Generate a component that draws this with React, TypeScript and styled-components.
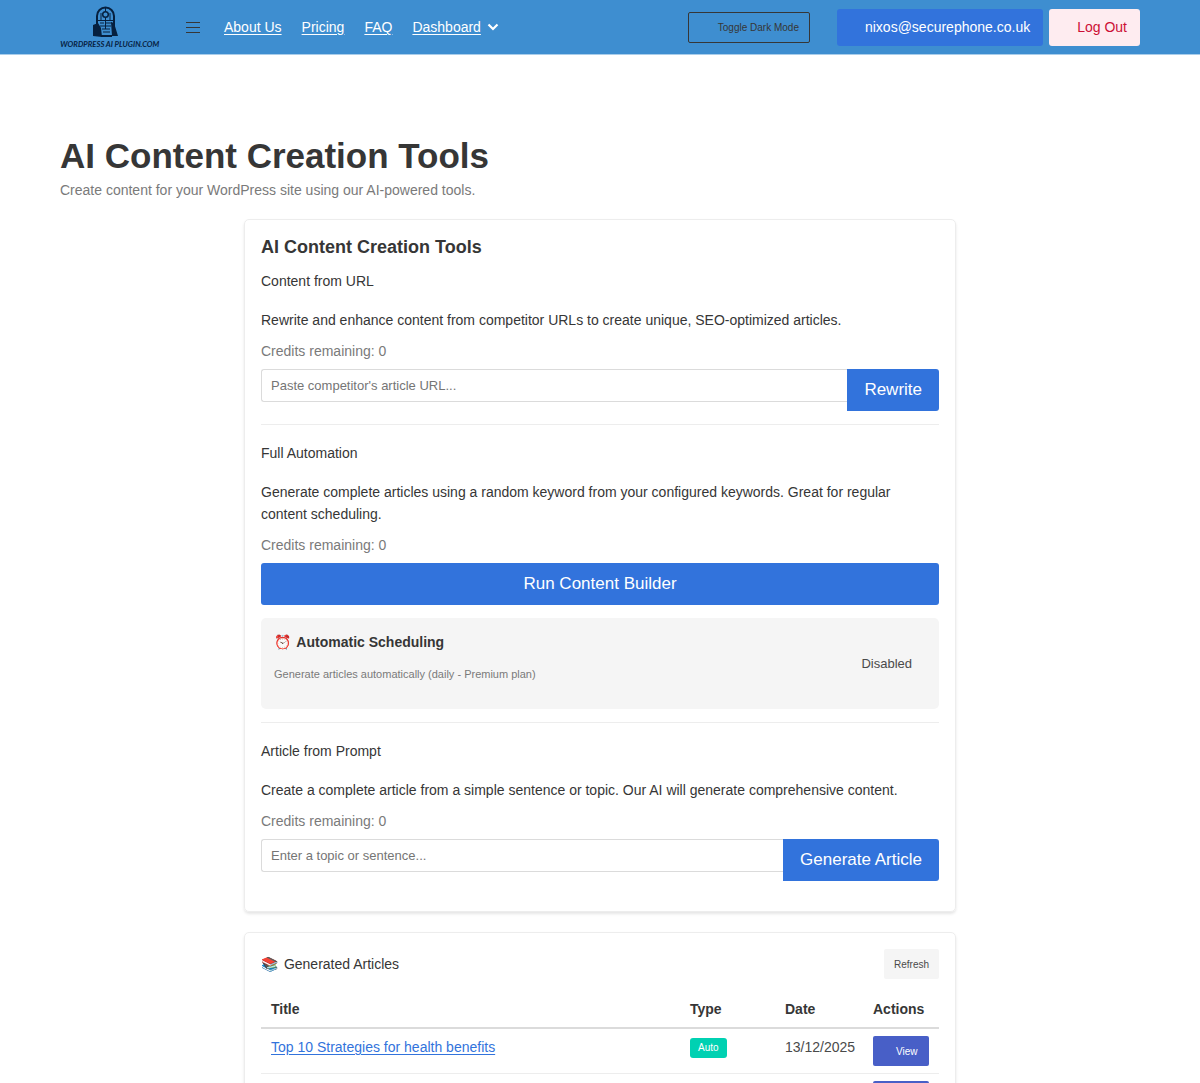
import React from "react";
import styled, { createGlobalStyle } from "styled-components";

const Global = createGlobalStyle`
  * { box-sizing: border-box; }
  body { margin: 0; background: #fff; color: #363636; font: 14px/22px "Liberation Sans", Arial, sans-serif; }
  h1, h2, h3, h4, p { margin: 0; }
  button, input { font-family: inherit; }
`;

const Page = styled.div`
  height: 100vh;
  overflow: hidden;
`;
const Nav = styled.nav`
  display: flex;
  align-items: center;
  height: 55px;
  padding: 0 60px;
  background: #3e8ed0;
  border-bottom: 1px solid #a9cdea;
`;
const Logo = styled.a`
  display: block;
  height: 44px;
  margin-right: 26px;
`;
const MenuButton = styled.button`
  display: grid;
  gap: 4px;
  width: 14px;
  margin-right: 24px;
  padding: 0;
  border: 0;
  background: none;
`;
const Bar = styled.span`
  height: 1px;
  background: #363636;
`;
const NavLinks = styled.div`
  display: flex;
  flex: 1;
  gap: 20px;
`;
const NavLink = styled.a`
  color: #fff;
  text-underline-offset: 2px;
`;
const Dropdown = styled.span`
  display: flex;
  align-items: center;
  gap: 6px;
`;
const NavActions = styled.div`
  display: flex;
  align-items: center;
  gap: 6px;
`;
const ToggleButton = styled.button`
  height: 31px;
  margin-right: 21px;
  padding: 0 10px 0 29px;
  border: 1px solid #363636;
  border-radius: 2px;
  background: none;
  color: #363636;
  font-size: 10px;
`;
const NavButton = styled.button<{ $danger?: boolean }>`
  height: 37px;
  padding: 0 13px 0 28px;
  border: 0;
  border-radius: 3px;
  background: ${(p) => (p.$danger ? "#feecf0" : "#3273dc")};
  color: ${(p) => (p.$danger ? "#cc0f35" : "#fff")};
  font-size: 14px;
`;
const Main = styled.main`
  padding: 80px 60px 0;
`;
const PageTitle = styled.h1`
  font-size: 35px;
  line-height: 42px;
`;
const PageSubtitle = styled.p`
  margin-top: 2px;
  color: #7a7a7a;
`;
const Card = styled.section`
  max-width: 712px;
  margin: 18px auto 20px;
  padding: 16px 16px 30px;
  border: 1px solid #ededed;
  border-radius: 5px;
  box-shadow: 0 2px 3px rgba(10, 10, 10, 0.1);
`;
const CardTitle = styled.h2`
  font-size: 18px;
  line-height: 22px;
`;
const Tool = styled.section<{ $first?: boolean }>`
  margin-top: ${(p) => (p.$first ? "12px" : "13px")};
  padding-top: ${(p) => (p.$first ? "0" : "17px")};
  border-top: ${(p) => (p.$first ? "0" : "1px solid #ededed")};
`;
const ToolTitle = styled.h3`
  font-size: 14px;
  font-weight: 400;
`;
const Emoji = styled.span`
  margin-right: 2px;
`;
const Description = styled.p`
  margin-top: 17px;
  padding-right: 32px;
`;
const Credits = styled.p`
  margin: 9px 0 7px;
  color: #7a7a7a;
`;
const InputRow = styled.form`
  display: flex;
  align-items: flex-start;
`;
const TextInput = styled.input`
  flex: 1;
  min-width: 0;
  height: 33px;
  padding: 0 9px;
  border: 1px solid #dbdbdb;
  border-right: 0;
  border-radius: 3px 0 0 3px;
  background: #fff;
  font-size: 13px;
  &::placeholder { color: #757575; }
`;
const PrimaryButton = styled.button<{ $wide?: boolean }>`
  width: ${(p) => (p.$wide ? "100%" : "auto")};
  height: 42px;
  padding: 0 17px;
  border: 0;
  border-radius: ${(p) => (p.$wide ? "3px" : "0 3px 3px 0")};
  background: #3273dc;
  color: #fff;
  font-size: 17px;
`;
const Schedule = styled.div`
  display: flex;
  align-items: center;
  justify-content: space-between;
  margin-top: 13px;
  padding: 13px 27px 13px 13px;
  border-radius: 5px;
  background: #f5f5f5;
`;
const ScheduleTitle = styled.h4`
  font-size: 14px;
`;
const ScheduleNote = styled.p`
  margin: 13px 0 14px;
  color: #7a7a7a;
  font-size: 11px;
  line-height: 16px;
`;
const Status = styled.span`
  color: #4a4a4a;
  font-size: 13px;
`;
const ListHeader = styled.header`
  display: flex;
  align-items: center;
  justify-content: space-between;
`;
const SmallButton = styled.button<{ $view?: boolean }>`
  display: block;
  height: 30px;
  padding: ${(p) => (p.$view ? "0 11px 0 23px" : "0 10px")};
  border: 0;
  border-radius: 2px;
  background: ${(p) => (p.$view ? "#485fc7" : "#f5f5f5")};
  color: ${(p) => (p.$view ? "#fff" : "#4a4a4a")};
  font-size: 10px;
`;
const Table = styled.table`
  width: 100%;
  margin-top: 13px;
  border-collapse: separate;
  border-spacing: 0;
  table-layout: fixed;
`;
const HeadCell = styled.th<{ $width?: string }>`
  width: ${(p) => p.$width ?? "auto"};
  padding: 7px 10px;
  border-bottom: 2px solid #dbdbdb;
  line-height: 21px;
  text-align: left;
`;
const Cell = styled.td`
  padding: 7px 0 7px 10px;
  border-bottom: 1px solid #ededed;
  color: #4a4a4a;
  vertical-align: top;
`;
const ArticleLink = styled.a`
  color: #3273dc;
  text-underline-offset: 2px;
`;
const Tag = styled.span<{ $color: string }>`
  display: block;
  width: fit-content;
  margin-top: 2px;
  padding: 0 8px;
  border-radius: 3px;
  background: ${(p) => p.$color};
  color: #fff;
  font-size: 10px;
  line-height: 20px;
`;

const articles = [
  { title: "Top 10 Strategies for health benefits", type: "Auto", color: "#00d1b2", date: "13/12/2025" },
  { title: "", type: "Prompt", color: "#48c78e", date: "" },
];

function LogoMark() {
  return (
    <svg width="100" height="44" viewBox="0 0 100 44" role="img" aria-label="WordPress AI Plugin.com">
      <g fill="none" stroke="#06203f">
        <path d="M37 21V11a8.500 8.500 0 0 1 17 0v12" strokeWidth="2" />
        <circle cx="45.500" cy="9.500" r="2.800" strokeWidth="1.500" />
        <path d="M45.500 3v4M41 8v7M50 8v7M38 15.500h15" strokeWidth="1" />
        <path d="M40 18h4M46 18h6M40 21h11M42 24h8M43 27h7M45.500 12v12" strokeWidth="1" />
        <path d="M41 31h11" strokeWidth="2" />
      </g>
      <path d="M33 20l5-2 3 5 1 9-9-1zM51 17l3 1 4 13h-6zM36 14h2v8h-2z" fill="#06203f" />
      <svg width="100" height="44" viewBox="0 0 104 46">
        <text x="0" y="44" fill="#06203f" fontSize="8" fontWeight="700" fontStyle="italic" fontFamily="Lato, sans-serif">WORDPRESS AI PLUGIN.COM</text>
      </svg>
    </svg>
  );
}

export default function App() {
  return (
    <Page>
      <Global />
      <Nav>
        <Logo href="#"><LogoMark /></Logo>
        <MenuButton aria-label="Menu"><Bar /><Bar /><Bar /></MenuButton>
        <NavLinks>
          <NavLink href="#">About Us</NavLink>
          <NavLink href="#">Pricing</NavLink>
          <NavLink href="#">FAQ</NavLink>
          <Dropdown>
            <NavLink href="#">Dashboard</NavLink>
            <svg width="12" height="8" viewBox="0 0 12 8" aria-hidden="true"><path d="M1.500 1.500L6 6l4.500-4.500" fill="none" stroke="#fff" strokeWidth="2.200" /></svg>
          </Dropdown>
        </NavLinks>
        <NavActions>
          <ToggleButton>Toggle Dark Mode</ToggleButton>
          <NavButton>nixos@securephone.co.uk</NavButton>
          <NavButton $danger>Log Out</NavButton>
        </NavActions>
      </Nav>
      <Main>
        <PageTitle>AI Content Creation Tools</PageTitle>
        <PageSubtitle>Create content for your WordPress site using our AI-powered tools.</PageSubtitle>
        <Card>
          <CardTitle>AI Content Creation Tools</CardTitle>
          <Tool $first>
            <ToolTitle>Content from URL</ToolTitle>
            <Description>Rewrite and enhance content from competitor URLs to create unique, SEO-optimized articles.</Description>
            <Credits>Credits remaining: 0</Credits>
            <InputRow>
              <TextInput aria-label="Article URL" placeholder="Paste competitor's article URL..." />
              <PrimaryButton type="button">Rewrite</PrimaryButton>
            </InputRow>
          </Tool>
          <Tool>
            <ToolTitle>Full Automation</ToolTitle>
            <Description>Generate complete articles using a random keyword from your configured keywords. Great for regular content scheduling.</Description>
            <Credits>Credits remaining: 0</Credits>
            <PrimaryButton type="button" $wide>Run Content Builder</PrimaryButton>
            <Schedule>
              <div>
                <ScheduleTitle><Emoji>⏰</Emoji> Automatic Scheduling</ScheduleTitle>
                <ScheduleNote>Generate articles automatically (daily - Premium plan)</ScheduleNote>
              </div>
              <Status>Disabled</Status>
            </Schedule>
          </Tool>
          <Tool>
            <ToolTitle>Article from Prompt</ToolTitle>
            <Description>Create a complete article from a simple sentence or topic. Our AI will generate comprehensive content.</Description>
            <Credits>Credits remaining: 0</Credits>
            <InputRow>
              <TextInput aria-label="Article topic" placeholder="Enter a topic or sentence..." />
              <PrimaryButton type="button">Generate Article</PrimaryButton>
            </InputRow>
          </Tool>
        </Card>
        <Card>
          <ListHeader>
            <ToolTitle><Emoji>📚</Emoji> Generated Articles</ToolTitle>
            <SmallButton>Refresh</SmallButton>
          </ListHeader>
          <Table>
            <thead>
              <tr>
                <HeadCell>Title</HeadCell>
                <HeadCell $width="95px">Type</HeadCell>
                <HeadCell $width="88px">Date</HeadCell>
                <HeadCell $width="76px">Actions</HeadCell>
              </tr>
            </thead>
            <tbody>
              {articles.map((a) => (
                <tr key={a.type}>
                  <Cell><ArticleLink href="#">{a.title}</ArticleLink></Cell>
                  <Cell><Tag $color={a.color}>{a.type}</Tag></Cell>
                  <Cell>{a.date}</Cell>
                  <Cell><SmallButton $view>View</SmallButton></Cell>
                </tr>
              ))}
            </tbody>
          </Table>
        </Card>
      </Main>
    </Page>
  );
}
